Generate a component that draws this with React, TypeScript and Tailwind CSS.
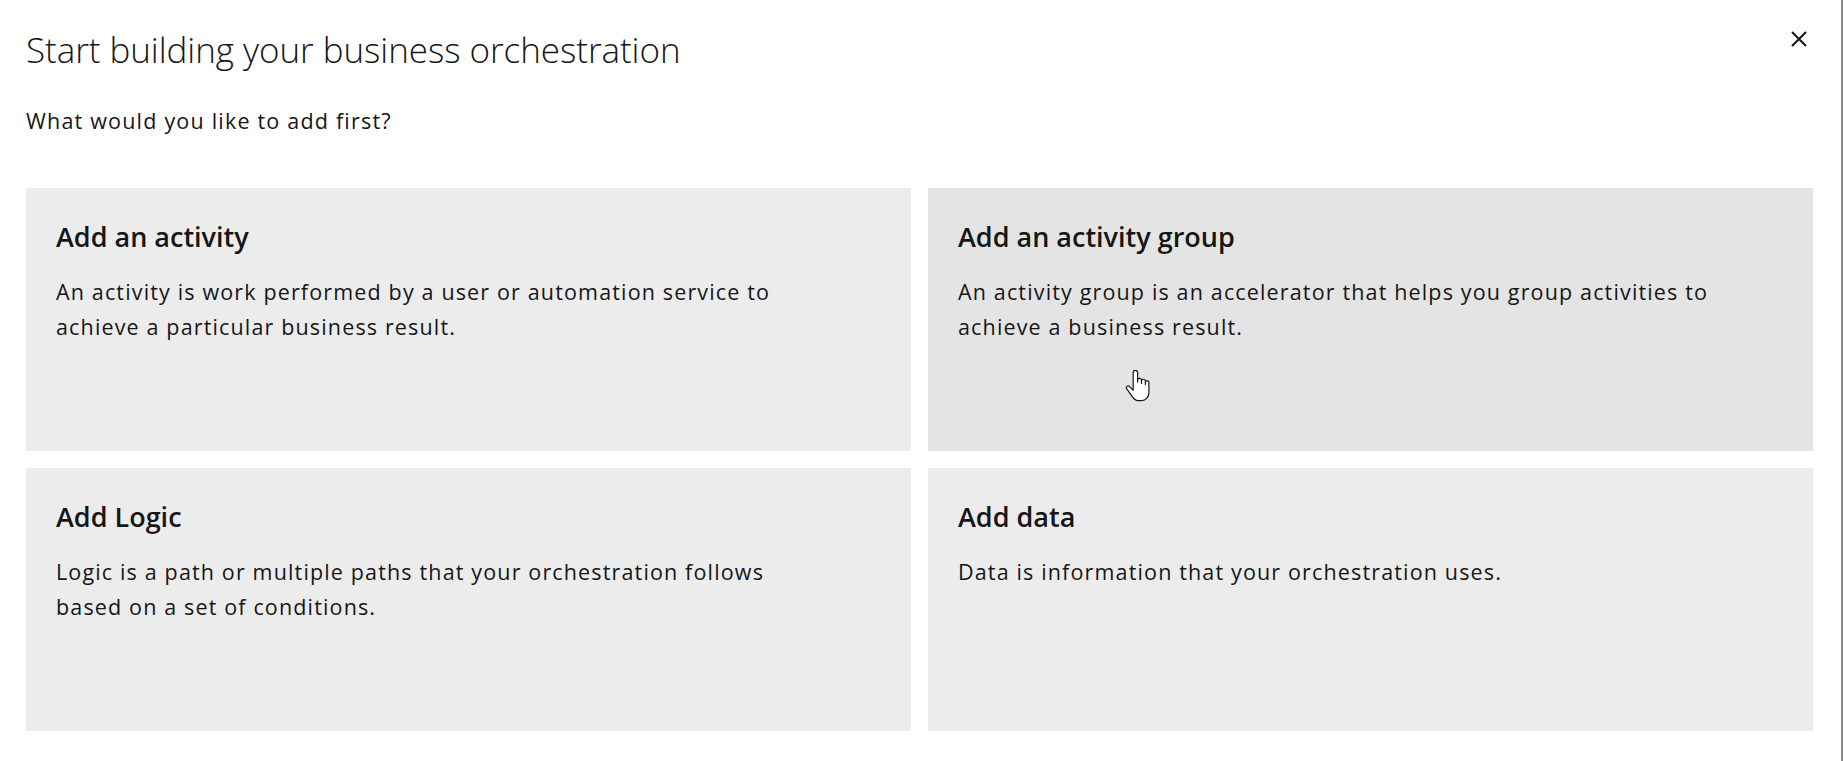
import React from 'react';

interface Option {
  title: string;
  text: string;
  hovered?: boolean;
}

const options: Option[] = [
  {
    title: 'Add an activity',
    text: 'An activity is work performed by a user or automation service to achieve a particular business result.',
  },
  {
    title: 'Add an activity group',
    text: 'An activity group is an accelerator that helps you group activities to achieve a business result.',
    hovered: true,
  },
  {
    title: 'Add Logic',
    text: 'Logic is a path or multiple paths that your orchestration follows based on a set of conditions.',
  },
  {
    title: 'Add data',
    text: 'Data is information that your orchestration uses.',
  },
];

const HandCursor = () => (
  <svg
    className="pointer-events-none absolute left-[1125px] top-[370px] h-[33px] w-[26px]"
    viewBox="0 0 17.5 22"
    fill="none"
  >
    <path
      d="M5.5 1.6a1.5 1.5 0 0 1 3 0V8V6.8a1.3 1.3 0 0 1 2.6 0V9V7.4a1.3 1.3 0 0 1 2.6 0V9.6V8.4a1.2 1.2 0 0 1 2.4 0V15c0 3-2 5.5-5 5.5H9c-2 0-3-1-4-2.5L1.2 12.6a1.2 1.2 0 0 1 1.9-1.5L5.5 13.5Z"
      fill="#fff"
      stroke="#161616"
      strokeWidth="0.8"
      strokeLinejoin="round"
    />
  </svg>
);

export default function App() {
  return (
    <div className="relative h-[761px] w-full overflow-hidden border-r-2 border-[#8a8a8a] bg-white font-['Open_Sans','Liberation_Sans',sans-serif] text-[#161616]">
      <header className="pl-[26px] pt-[28px]">
        <h2 className="text-[35px] font-light leading-[44px] tracking-[-0.05px]">
          Start building your business orchestration
        </h2>
      </header>

      <button
        aria-label="Close"
        className="absolute right-[16px] top-[13px] flex h-[52px] w-[52px] items-center justify-center"
      >
        <svg width="18" height="18" viewBox="0 0 18 18" fill="none">
          <path d="M2 2L16 16M16 2L2 16" stroke="#161616" strokeWidth="2" />
        </svg>
      </button>

      <p className="mt-[31px] pl-[26px] text-[21.5px] leading-[35px] tracking-[1.2px]">
        What would you like to add first?
      </p>

      <div className="mt-[50px] grid grid-cols-2 gap-[17px] pl-[26px] pr-[28px]">
        {options.map((o) => (
          <div
            key={o.title}
            className={
              'h-[263px] cursor-pointer px-[30px] pt-[31px] ' + (o.hovered ? 'bg-[#e4e4e4]' : 'bg-[#ececec]')
            }
          >
            <h3 className="text-[27px] font-semibold leading-[36px]">{o.title}</h3>
            <p className="mt-[19px] max-w-[764px] text-[21.5px] leading-[35px] tracking-[1.15px]">{o.text}</p>
          </div>
        ))}
      </div>

      <HandCursor />
    </div>
  );
}
